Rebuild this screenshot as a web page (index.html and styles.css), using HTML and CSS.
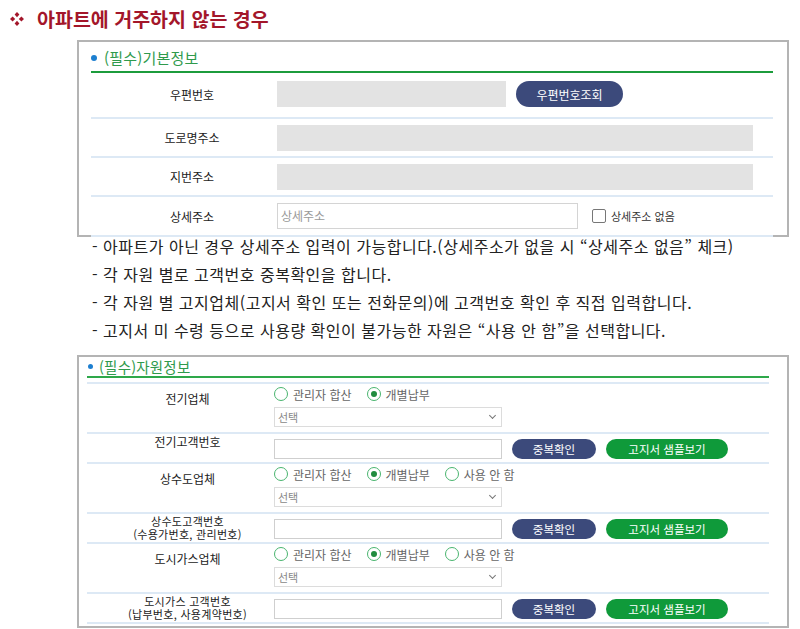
FILE: index.html
```html
<!DOCTYPE html>
<html lang="ko">
<head>
<meta charset="utf-8">
<link rel="stylesheet" href="styles.css">
</head>
<body>
<div class="page">
  <h1 class="title">
    <svg class="title-icon" width="14" height="14" viewBox="0 0 14 14">
      <path d="M7 0 L9.4 2.6 L7 5.2 L4.6 2.6Z M7 8.8 L9.4 11.4 L7 14 L4.6 11.4Z M0 7 L2.6 4.6 L5.2 7 L2.6 9.4Z M8.8 7 L11.4 4.6 L14 7 L11.4 9.4Z" fill="#a3162a"/>
    </svg>
    <span>아파트에 거주하지 않는 경우</span>
  </h1>

  <section class="box box-basic">
    <div class="box-head"><span class="dot"></span>(필수)기본정보</div>
    <div class="row row-first">
      <div class="label">우편번호</div>
      <div class="cell">
        <div class="field-ro w-zip"></div>
        <button class="btn btn-navy btn-zip">우편번호조회</button>
      </div>
    </div>
    <div class="row">
      <div class="label">도로명주소</div>
      <div class="cell"><div class="field-ro w-full"></div></div>
    </div>
    <div class="row">
      <div class="label">지번주소</div>
      <div class="cell"><div class="field-ro w-full"></div></div>
    </div>
    <div class="row row-last">
      <div class="label">상세주소</div>
      <div class="cell">
        <div class="field w-detail">상세주소</div>
        <span class="checkbox"></span>
        <span class="check-label">상세주소 없음</span>
      </div>
    </div>
  </section>

  <ul class="notes">
    <li>- 아파트가 아닌 경우 상세주소 입력이 가능합니다.(상세주소가 없을 시 “상세주소 없음” 체크)</li>
    <li>- 각 자원 별로 고객번호 중복확인을 합니다.</li>
    <li>- 각 자원 별 고지업체(고지서 확인 또는 전화문의)에 고객번호 확인 후 직접 입력합니다.</li>
    <li>- 고지서 미 수령 등으로 사용량 확인이 불가능한 자원은 “사용 안 함”을 선택합니다.</li>
  </ul>

  <section class="box box-res">
    <div class="box-head head-res"><span class="dot"></span>(필수)자원정보</div>
    <div class="rows-res">
      <div class="rrow rrow-choice">
        <div class="rlabel">전기업체</div>
        <div class="rcell">
          <div class="radios">
            <span class="radio"></span><span class="rtext">관리자 합산</span>
            <span class="radio on"></span><span class="rtext">개별납부</span>
          </div>
          <div class="select">선택<span class="chev"></span></div>
        </div>
      </div>
      <div class="rrow rrow-input">
        <div class="rlabel one">전기고객번호</div>
        <div class="rcell inline">
          <div class="rfield"></div>
          <button class="btn btn-navy btn-dup">중복확인</button>
          <button class="btn btn-green btn-sample">고지서 샘플보기</button>
        </div>
      </div>
      <div class="rrow rrow-choice">
        <div class="rlabel">상수도업체</div>
        <div class="rcell">
          <div class="radios">
            <span class="radio"></span><span class="rtext">관리자 합산</span>
            <span class="radio on"></span><span class="rtext">개별납부</span>
            <span class="radio"></span><span class="rtext">사용 안 함</span>
          </div>
          <div class="select">선택<span class="chev"></span></div>
        </div>
      </div>
      <div class="rrow rrow-input">
        <div class="rlabel two"><span class="ln">상수도고객번호</span><span class="ln">(수용가번호, 관리번호)</span></div>
        <div class="rcell inline">
          <div class="rfield"></div>
          <button class="btn btn-navy btn-dup">중복확인</button>
          <button class="btn btn-green btn-sample">고지서 샘플보기</button>
        </div>
      </div>
      <div class="rrow rrow-choice">
        <div class="rlabel">도시가스업체</div>
        <div class="rcell">
          <div class="radios">
            <span class="radio"></span><span class="rtext">관리자 합산</span>
            <span class="radio on"></span><span class="rtext">개별납부</span>
            <span class="radio"></span><span class="rtext">사용 안 함</span>
          </div>
          <div class="select">선택<span class="chev"></span></div>
        </div>
      </div>
      <div class="rrow rrow-input">
        <div class="rlabel two"><span class="ln">도시가스 고객번호</span><span class="ln">(납부번호, 사용계약번호)</span></div>
        <div class="rcell inline">
          <div class="rfield"></div>
          <button class="btn btn-navy btn-dup">중복확인</button>
          <button class="btn btn-green btn-sample">고지서 샘플보기</button>
        </div>
      </div>
    </div>
  </section>
</div>
</body>
</html>
```

FILE: styles.css
```css
* { box-sizing: border-box; }
html, body { margin: 0; padding: 0; background: #fff; }
body {
  font-family: "Noto Sans CJK KR", "Noto Sans", sans-serif;
  color: #222;
  width: 800px;
  height: 629px;
  overflow: hidden;
}
.page { padding-top: 5px; }

.title {
  margin: 0;
  height: 27px;
  display: flex;
  align-items: center;
  font-size: 19.5px;
  font-weight: bold;
  color: #a3162a;
  padding-left: 10px;
}
.title-icon { margin-right: 13px; }

.box {
  margin-left: 77px;
  width: 712px;
  border: 2px solid #b4b4b4;
  background: #fff;
}
.box-basic {
  margin-top: 8px;
  height: 197px;
  padding: 0 14px 0 12px;
}
.box-head {
  display: flex;
  align-items: center;
  height: 31px;
  padding-top: 2px;
  font-size: 15px;
  letter-spacing: 0.2px;
  color: #2f9a4c;
  border-bottom: 2px solid #1c9c3c;
}
.dot {
  width: 6px;
  height: 6px;
  border-radius: 50%;
  background: #1d7fd0;
  margin-right: 7px;
}
.row {
  display: flex;
  align-items: center;
  height: 39px;
  border-bottom: 2px solid #dde9f5;
}
.row-first { height: 46px; padding-bottom: 2px; }
.row-last { height: 40px; }
.label {
  width: 186px;
  padding-left: 16px;
  text-align: center;
  font-size: 12px;
  color: #222;
}
.cell { display: flex; align-items: center; }
.field-ro { height: 26px; background: #e3e3e3; }
.w-zip { width: 229px; }
.w-full { width: 476px; }
.field {
  height: 26px;
  border: 1px solid #d4d4d4;
  font-size: 12px;
  color: #999;
  line-height: 24px;
  padding-left: 3px;
}
.w-detail { width: 301px; }
.checkbox {
  width: 14px;
  height: 14px;
  border: 1px solid #777;
  border-radius: 2px;
  margin-left: 14px;
}
.check-label { font-size: 11px; color: #333; margin-left: 5px; }

.btn {
  border: 0;
  color: #fff;
  font-family: inherit;
  padding: 0;
  border-radius: 14px;
  cursor: pointer;
}
.btn-navy { background: #3c4a7b; }
.btn-green { background: #0f9a3a; }
.btn-zip { margin-left: 10px; width: 107px; height: 26px; font-size: 12px; }

.notes {
  list-style: none;
  margin: -5px 0 0 0;
  padding: 0 0 0 92px;
  font-size: 16px;
  letter-spacing: 0.5px;
  line-height: 28px;
  color: #222;
}

.box-res {
  margin-top: 11px;
  height: 273px;
  padding: 0 18px 0 8px;
}
.head-res {
  height: 21px;
  padding-top: 0;
  font-size: 14.5px;
  border-bottom: 2px solid #2ea84a;
}
.head-res .dot { margin-right: 6px; margin-left: 1px; width: 5px; height: 5px; }
.rows-res { margin-top: 4px; border-top: 2px solid #dde9f5; }
.rrow {
  display: flex;
  border-bottom: 2px solid #dde9f5;
}
.rrow-choice { height: 50px; }
.rrow-input { height: 30px; }
.rlabel {
  width: 187px;
  padding-left: 14px;
  text-align: center;
  font-size: 12px;
  color: #222;
}
.rrow-choice .rlabel { padding-top: 5px; line-height: 20px; }
.rlabel.one { padding-top: 1px; line-height: 14px; }
.rlabel.two {
  display: flex;
  flex-direction: column;
  align-items: center;
  padding-top: 1px;
  font-size: 11px;
  letter-spacing: 0.3px;
}
.rlabel.two .ln { display: block; height: 12.5px; line-height: 12.5px; }
.rcell { display: flex; flex-direction: column; }
.rcell.inline { flex-direction: row; align-items: center; padding-top: 3px; height: 26px; }
.radios { display: flex; align-items: center; height: 20px; }
.radio {
  width: 14px;
  height: 14px;
  border: 1.5px solid #4ab56f;
  border-radius: 50%;
  display: flex;
  align-items: center;
  justify-content: center;
}
.radio.on::after {
  content: "";
  width: 6px;
  height: 6px;
  border-radius: 50%;
  background: #1f8c3e;
}
.rtext {
  font-size: 12px;
  color: #666;
  margin-left: 5px;
  margin-right: 15px;
}
.select {
  position: relative;
  width: 228px;
  height: 20px;
  margin-top: 3px;
  border: 1px solid #dcdcdc;
  font-size: 11px;
  color: #888;
  line-height: 18px;
  padding-left: 3px;
}
.chev {
  position: absolute;
  right: 6px;
  top: 5px;
  width: 5px;
  height: 5px;
  border-right: 1px solid #777;
  border-bottom: 1px solid #777;
  transform: rotate(45deg);
}
.rfield {
  width: 228px;
  height: 20px;
  border: 1px solid #cfcfcf;
}
.btn-dup { margin-left: 10px; width: 84px; height: 20px; font-size: 11.5px; border-radius: 10px; }
.btn-sample { margin-left: 10px; width: 122px; height: 20px; font-size: 11.5px; border-radius: 10px; }
```
